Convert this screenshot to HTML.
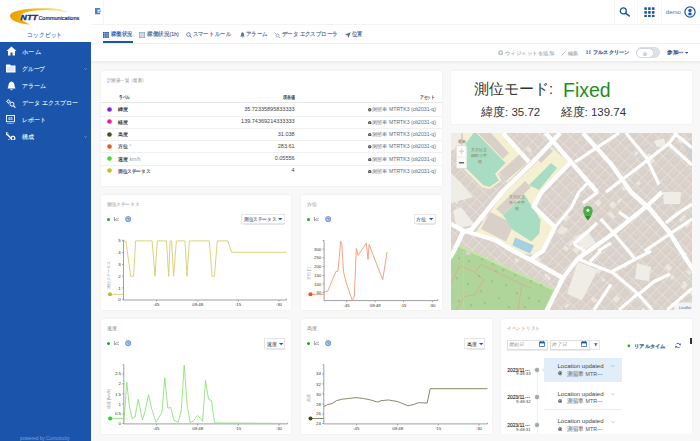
<!DOCTYPE html>
<html><head><meta charset="utf-8">
<style>
*{box-sizing:border-box}
html,body{margin:0;padding:0}
body{width:700px;height:441px;overflow:hidden;position:relative;background:#f8f8f8;font-family:"Liberation Sans",sans-serif;color:#333}
.a{position:absolute;white-space:nowrap}
.sb{left:0;top:0;width:91px;height:441px;background:#1b55ab}
.logo{left:0;top:0;width:91px;height:41.5px;background:#fff}
.mi{color:#fff;font-size:6.4px;left:22px;-webkit-text-stroke:0.05px #fff}
.card{position:absolute;background:#fff;box-shadow:0 0 1px rgba(0,0,0,.12)}
.ttl{font-size:4.6px;color:#888}
.tab{font-size:5.5px;color:#4a6796;-webkit-text-stroke:0.15px currentColor}
.cell{font-size:5px;color:#333}
</style></head><body>

<!-- SIDEBAR -->
<div class="a sb"></div>
<div class="a logo">
  <svg width="91" height="42" viewBox="0 0 91 42" style="position:absolute;left:0;top:0">
    <defs><linearGradient id="lg" x1="10" x2="68" y1="0" y2="0" gradientUnits="userSpaceOnUse"><stop offset="0" stop-color="#eaa000"/><stop offset="0.45" stop-color="#f4bd10"/><stop offset="1" stop-color="#fbecc0"/></linearGradient></defs>
    <path d="M30.2 24.5 C18 24 9.5 20 10 15.5 C10.8 10.5 26 7.8 50 8.2 C58 8.5 64 10 68.5 12.6 C60 10.8 52 10 46 10 C31 10.2 21.5 12.3 20.8 15.8 C20.3 19.3 24 22.2 30.2 24.5 Z" fill="url(#lg)"/>
    <text x="20.6" y="20.2" font-family="Liberation Sans" font-weight="bold" font-style="italic" font-size="6.3" fill="#1b2d7a" stroke="#1b2d7a" stroke-width="0.3" textLength="17" lengthAdjust="spacingAndGlyphs">NTT</text>
    <text x="38.4" y="20.2" font-family="Liberation Sans" font-size="5.6" fill="#1b2d7a" textLength="40.8" lengthAdjust="spacingAndGlyphs" stroke="#1b2d7a" stroke-width="0.22">Communications</text>
  </svg>
  <div class="a" style="left:27px;top:30.8px;font-size:6px;color:#4b79c4;letter-spacing:0.25px;-webkit-text-stroke:0.12px #4b79c4"><span style="display:inline-block;transform-origin:0 0;transform:scaleX(0.94)">コックピット</span></div>
</div>
<!-- menu items -->
<svg class="a" style="left:6px;top:46px" width="11" height="10" viewBox="0 0 11 10"><path d="M5.5 0.5 L0.5 5 H2 V9.5 H4.5 V6.5 H6.5 V9.5 H9 V5 H10.5 Z" fill="#fff"/></svg>
<div class="a mi" style="top:47.5px"><span style="display:inline-block;transform-origin:0 0;transform:scaleX(1.05)">ホーム</span></div>
<svg class="a" style="left:6px;top:64px" width="10" height="9" viewBox="0 0 10 9"><path d="M0 0.5 H4 L5 1.5 H9.5 V8.5 H0 Z" fill="#fff"/><rect x="1" y="2.5" width="7.5" height="5" fill="#dfe8f5"/></svg>
<div class="a mi" style="top:64.5px"><span style="display:inline-block;transform-origin:0 0;transform:scaleX(0.97)">グループ</span></div>
<svg class="a" style="left:83.6px;top:68px" width="3" height="2" viewBox="0 0 3 2"><path d="M0.3 0.3 L1.5 1.5 L2.7 0.3" fill="none" stroke="#aac0e6" stroke-width="0.5"/></svg>
<svg class="a" style="left:6.5px;top:81px" width="9" height="10" viewBox="0 0 9 10"><path d="M4.5 0.5 C2 1 1.5 3 1.5 5 L0.5 7.5 H8.5 L7.5 5 C7.5 3 7 1 4.5 0.5 Z M3.3 8.3 H5.7 C5.5 9.6 3.5 9.6 3.3 8.3Z" fill="#fff"/></svg>
<div class="a mi" style="top:81.5px">アラーム</div>
<svg class="a" style="left:5.8px;top:98.6px" width="10" height="9" viewBox="0 0 10 9"><circle cx="2.4" cy="2.4" r="1.3" fill="none" stroke="#fff" stroke-width="0.9"/><path d="M2.4 0 V0.8 M2.4 4 V4.8 M0 2.4 H0.8 M4 2.4 H4.8" stroke="#fff" stroke-width="0.7"/><circle cx="6" cy="5.2" r="2" fill="none" stroke="#fff" stroke-width="1"/><path d="M7.4 6.6 L9.4 8.6" stroke="#fff" stroke-width="1.2"/></svg>
<div class="a mi" style="top:98.5px">データ エクスプロー</div>
<svg class="a" style="left:6px;top:114.6px" width="9" height="9.5" viewBox="0 0 9 9.5"><rect x="0.5" y="0.5" width="8" height="6.2" fill="none" stroke="#fff" stroke-width="0.9"/><text x="4.5" y="5.4" text-anchor="middle" font-size="4" font-weight="bold" fill="#fff" font-family="Liberation Sans">01</text><path d="M1.5 8.6 H7.5" stroke="#fff" stroke-width="0.8" stroke-dasharray="0.8 0.5"/></svg>
<div class="a mi" style="top:115.5px">レポート</div>
<svg class="a" style="left:6px;top:131.8px" width="9.5" height="8.5" viewBox="0 0 9.5 8.5"><path d="M1 0.6 C0 1.6 0.6 3 1.8 3 L5.5 6.7" stroke="#fff" stroke-width="1.3" fill="none"/><path d="M0.8 0.2 L2.2 1.6" stroke="#fff" stroke-width="0.8"/><circle cx="7" cy="6.2" r="1.8" fill="none" stroke="#fff" stroke-width="1.1"/><path d="M7 3.6 V4.2 M7 8.2 V8.8 M4.4 6.2 H5 M9 6.2 H9.6 M5.2 4.4 L5.6 4.8 M8.4 7.6 L8.8 8" stroke="#fff" stroke-width="0.8"/><path d="M3.6 6.8 L2 8.4" stroke="#fff" stroke-width="1"/></svg>
<div class="a mi" style="top:132.5px">構成</div>
<svg class="a" style="left:83.6px;top:136px" width="3" height="2" viewBox="0 0 3 2"><path d="M0.3 0.3 L1.5 1.5 L2.7 0.3" fill="none" stroke="#aac0e6" stroke-width="0.5"/></svg>
<div class="a" style="left:20px;top:435.5px;font-size:4.6px;color:#7f9fd6"><span style="display:inline-block;transform-origin:0 0;transform:scaleX(1.04)">powered by Cumulocity</span></div>

<!-- HEADER -->
<div class="a" style="left:91px;top:0;width:609px;height:61px;background:#fff"></div>
<div class="a" style="left:91px;top:23.5px;width:609px;height:1px;background:#f3f3f3"></div>
<div class="a" style="left:103.3px;top:0;width:0.8px;height:23.5px;background:#f6f6f6"></div>
<div class="a" style="left:614px;top:0;width:1px;height:23.5px;background:#f6f6f6"></div>
<div class="a" style="left:637px;top:0;width:1px;height:23.5px;background:#f6f6f6"></div>
<div class="a" style="left:660.5px;top:0;width:1px;height:23.5px;background:#f6f6f6"></div>
<svg class="a" style="left:95px;top:8.2px" width="6.5" height="6.4" viewBox="0 0 6.5 6.4"><rect x="0" y="0" width="5.2" height="6.3" fill="#4f80c8"/><rect x="2.6" y="1.7" width="2.7" height="2.9" fill="#fff"/><path d="M3.2 3.15 L4.4 2.3 V4 Z" fill="#3f72c0"/><rect x="4.2" y="2.85" width="2.1" height="0.6" fill="#3f72c0"/></svg>
<!-- search -->
<svg class="a" style="left:619px;top:7px" width="12" height="10" viewBox="0 0 12 10"><circle cx="4.3" cy="3.9" r="3" fill="none" stroke="#1b55ab" stroke-width="1.3"/><path d="M6.5 6.2 L10.8 9.3" stroke="#1b55ab" stroke-width="1.5"/></svg>
<!-- grid -->
<svg class="a" style="left:643.5px;top:6.5px" width="11" height="10.5" viewBox="0 0 11 10.5">
<g fill="#1b55ab"><rect x="0.3" y="0.3" width="2.6" height="2.6"/><rect x="4.1" y="0.3" width="2.6" height="2.6"/><rect x="7.9" y="0.3" width="2.6" height="2.6"/><rect x="0.3" y="4.1" width="2.6" height="2.6"/><rect x="4.1" y="4.1" width="2.6" height="2.6"/><rect x="7.9" y="4.1" width="2.6" height="2.6"/><rect x="0.3" y="7.9" width="2.6" height="2.6"/><rect x="4.1" y="7.9" width="2.6" height="2.6"/><rect x="7.9" y="7.9" width="2.6" height="2.6"/></g></svg>
<div class="a" style="left:665.8px;top:8.6px;font-size:6px;color:#4d6eae">demo</div>
<svg class="a" style="left:684px;top:5.5px" width="12" height="12" viewBox="0 0 12 12"><circle cx="6" cy="6" r="5.1" fill="none" stroke="#1b55ab" stroke-width="1.2"/><circle cx="6" cy="4.4" r="1.7" fill="#1b55ab"/><path d="M4.4 9.3 V7.4 C4.4 6.2 7.6 6.2 7.6 7.4 V9.3 Z" fill="#1b55ab"/></svg>

<!-- tabs -->
<div class="a" style="left:91px;top:43px;width:609px;height:0.7px;background:#eef0f3"></div>
<svg class="a" style="left:103px;top:32px" width="6" height="6" viewBox="0 0 6 6"><g fill="#1b55ab"><rect x="0" y="0" width="1.7" height="1.7"/><rect x="2.1" y="0" width="1.7" height="1.7"/><rect x="4.2" y="0" width="1.7" height="1.7"/><rect x="0" y="2.1" width="1.7" height="1.7"/><rect x="2.1" y="2.1" width="1.7" height="1.7"/><rect x="4.2" y="2.1" width="1.7" height="1.7"/><rect x="0" y="4.2" width="1.7" height="1.7"/><rect x="2.1" y="4.2" width="1.7" height="1.7"/><rect x="4.2" y="4.2" width="1.7" height="1.7"/></g></svg>
<div class="a tab" style="left:111px;top:31.1px;color:#1b55ab"><span style="display:inline-block;transform-origin:0 0;transform:scaleX(0.88)">稼働状況</span></div>
<div class="a" style="left:103px;top:41.3px;width:29.5px;height:1.7px;background:#1b55ab"></div>
<svg class="a" style="left:139px;top:32px" width="6" height="6" viewBox="0 0 6 6"><rect x="0.3" y="0.3" width="5.4" height="5.4" fill="none" stroke="#7e93b8" stroke-width="0.6"/><path d="M0.3 2 H5.7 M0.3 4 H5.7 M2 0.3 V5.7 M4 0.3 V5.7" stroke="#7e93b8" stroke-width="0.4"/></svg>
<div class="a tab" style="left:146.5px;top:31.1px"><span style="display:inline-block;transform-origin:0 0;transform:scaleX(0.94)">稼働状況(1h)</span></div>
<svg class="a" style="left:185.5px;top:32px" width="6" height="6" viewBox="0 0 6 6"><circle cx="2.5" cy="2.5" r="1.8" fill="none" stroke="#5b76a3" stroke-width="0.9"/><path d="M3.8 3.8 L5.6 5.6" stroke="#5b76a3" stroke-width="1"/></svg>
<div class="a tab" style="left:193px;top:31.1px"><span style="display:inline-block;transform-origin:0 0;transform:scaleX(0.87)">スマート ルール</span></div>
<svg class="a" style="left:239.5px;top:32px" width="5" height="6" viewBox="0 0 5 6"><path d="M2.5 0.3 C1 0.6 1 2 1 3 L0.3 4.6 H4.7 L4 3 C4 2 4 0.6 2.5 0.3Z M1.8 5 H3.2 C3 5.9 2 5.9 1.8 5Z" fill="#5b76a3"/></svg>
<div class="a tab" style="left:246px;top:31.1px"><span style="display:inline-block;transform-origin:0 0;transform:scaleX(0.89)">アラーム</span></div>
<svg class="a" style="left:274px;top:32px" width="6" height="6" viewBox="0 0 6 6"><circle cx="3.6" cy="3.6" r="1.5" fill="none" stroke="#8aa0c4" stroke-width="0.8"/><path d="M4.7 4.7 L5.8 5.8 M0.5 0.5 L2.3 2.3" stroke="#8aa0c4" stroke-width="0.8"/></svg>
<div class="a tab" style="left:281.5px;top:31.1px"><span style="display:inline-block;transform-origin:0 0;transform:scaleX(0.9)">データ エクスプローラ</span></div>
<svg class="a" style="left:344.5px;top:32.3px" width="6" height="6" viewBox="0 0 6 6"><path d="M0.2 2.6 L5.8 0.2 L3.4 5.8 L2.6 3.4 Z" fill="#4d6b99"/></svg>
<div class="a tab" style="left:351.5px;top:31.1px"><span style="display:inline-block;transform-origin:0 0;transform:scaleX(0.88)">位置</span></div>

<!-- action bar -->
<svg class="a" style="left:497.5px;top:50.3px" width="5.4" height="5.4" viewBox="0 0 6 6"><circle cx="3" cy="3" r="2.8" fill="#b8c0cc"/><path d="M3 1.5 V4.5 M1.5 3 H4.5" stroke="#fff" stroke-width="0.8"/></svg>
<div class="a" style="left:505px;top:49.8px;font-size:5.2px;color:#aeb5c1;-webkit-text-stroke:0.15px #aeb5c1"><span style="display:inline-block;transform-origin:0 0;transform:scaleX(1.09)">ウィジェットを追加</span></div>
<svg class="a" style="left:561px;top:50.5px" width="5" height="5" viewBox="0 0 5 5"><path d="M0.5 4.5 L4.3 0.7" stroke="#aab3c0" stroke-width="0.9"/></svg>
<div class="a" style="left:568px;top:49.8px;font-size:5.2px;color:#aeb5c1;-webkit-text-stroke:0.15px #aeb5c1">編集</div>
<svg class="a" style="left:585.6px;top:50.3px" width="5" height="4.4" viewBox="0 0 5 4.4"><g fill="none" stroke="#5a78a8" stroke-width="0.75"><path d="M0.4 1.6 L1.6 1.6 L1.6 0.4 M0.4 0.4 L1.6 1.6"/><path d="M4.6 1.6 L3.4 1.6 L3.4 0.4 M4.6 0.4 L3.4 1.6"/><path d="M0.4 2.8 L1.6 2.8 L1.6 4 M0.4 4 L1.6 2.8"/><path d="M4.6 2.8 L3.4 2.8 L3.4 4 M4.6 4 L3.4 2.8"/></g></svg>
<div class="a" style="left:593.3px;top:49.1px;font-size:5.3px;color:#3e5b8e;-webkit-text-stroke:0.3px #3e5b8e"><span style="display:inline-block;transform-origin:0 0;transform:scaleX(1.04)">フルスクリーン</span></div>
<div class="a" style="left:635.8px;top:47.3px;width:24px;height:11.2px;border-radius:6px;background:#dde1e8;border:0.5px solid #d8dce3"></div>
<div class="a" style="left:636.2px;top:47.8px;width:18px;height:10.2px;border-radius:5.1px;background:#fff;border:0.6px solid #d3d7de"></div>
<svg class="a" style="left:643px;top:50.5px" width="4" height="5" viewBox="0 0 4 5"><rect x="0.3" y="2" width="3.4" height="2.8" fill="#c6ccd6"/><path d="M1 2 V1.2 C1 0.2 3 0.2 3 1.2 V2" fill="none" stroke="#c6ccd6" stroke-width="0.5"/></svg>
<div class="a" style="left:667.2px;top:49.3px;font-size:5.3px;color:#3e5b8e;-webkit-text-stroke:0.3px #3e5b8e"><span style="display:inline-block;transform-origin:0 0;transform:scaleX(1.1)">参加⋯</span></div>
<svg class="a" style="left:684.9px;top:51.6px" width="3.2" height="2.2" viewBox="0 0 3.2 2.2"><path d="M0 0 H3.2 L1.6 2Z" fill="#3e5b8e"/></svg>
<!-- shadow under header -->
<div class="a" style="left:91px;top:61px;width:609px;height:3px;background:linear-gradient(#e9e9e9,#f8f8f8)"></div>

<!-- CARD: table -->
<div class="card" style="left:100.8px;top:70.8px;width:341px;height:115.4px"></div>
<div class="a ttl" style="left:106.8px;top:77.5px"><span style="display:inline-block;transform-origin:0 0;transform:scaleX(0.875)">計測値一覧（最新）</span></div>
<div class="a cell" style="left:118.6px;top:93.8px;font-weight:bold;font-size:4.8px"><span style="display:inline-block;transform-origin:0 0;transform:scaleX(0.73)">ラベル</span></div>
<div class="a cell" style="left:282.5px;top:93.8px;font-weight:bold;font-size:4.8px"><span style="display:inline-block;transform-origin:0 0;transform:scaleX(0.8)">現在値</span></div>
<div class="a cell" style="left:420px;top:93.8px;font-weight:bold;font-size:4.8px"><span style="display:inline-block;transform-origin:0 0;transform:scaleX(0.73)">アセット</span></div>
<div class="a" style="left:100.8px;top:102px;width:341px;height:0.6px;background:#e6e6e6"></div>
<svg class="a" style="left:106.8px;top:107.0px" width="5" height="5" viewBox="0 0 5 5"><circle cx="2.5" cy="2.5" r="2.3" fill="#7a22e6"/></svg>
<div class="a" style="left:118.2px;top:106.30000000000001px;font-size:5px;color:#333;-webkit-text-stroke:0.15px #333">緯度</div>
<div class="a" style="right:405.4px;top:106.0px;font-size:5.5px;color:#444">35.72335895833333</div>
<svg class="a" style="left:368.2px;top:108.30000000000001px" width="3.5" height="3.5" viewBox="0 0 4 4"><circle cx="2" cy="2" r="1.95" fill="#4a4a4a"/><circle cx="2" cy="2" r="0.7" fill="#ddd"/></svg>
<div class="a" style="right:264.2px;top:106.30000000000001px;font-size:5px;color:#5a6a80"><span style="display:inline-block;transform-origin:100% 0;transform:scaleX(1.03)">測留車 MTRTK3 (olt2031-q)</span></div>
<div class="a" style="left:100.8px;top:115.5px;width:341px;height:0.6px;background:#f0f0f0"></div>
<svg class="a" style="left:106.8px;top:119.3px" width="5" height="5" viewBox="0 0 5 5"><circle cx="2.5" cy="2.5" r="2.3" fill="#f2199a"/></svg>
<div class="a" style="left:118.2px;top:118.60000000000001px;font-size:5px;color:#333;-webkit-text-stroke:0.15px #333">経度</div>
<div class="a" style="right:405.4px;top:118.3px;font-size:5.5px;color:#444">139.74369214333333</div>
<svg class="a" style="left:368.2px;top:120.60000000000001px" width="3.5" height="3.5" viewBox="0 0 4 4"><circle cx="2" cy="2" r="1.95" fill="#4a4a4a"/><circle cx="2" cy="2" r="0.7" fill="#ddd"/></svg>
<div class="a" style="right:264.2px;top:118.60000000000001px;font-size:5px;color:#5a6a80"><span style="display:inline-block;transform-origin:100% 0;transform:scaleX(1.03)">測留車 MTRTK3 (olt2031-q)</span></div>
<div class="a" style="left:100.8px;top:127.8px;width:341px;height:0.6px;background:#f0f0f0"></div>
<svg class="a" style="left:106.8px;top:131.6px" width="5" height="5" viewBox="0 0 5 5"><circle cx="2.5" cy="2.5" r="2.3" fill="#4b4a1c"/></svg>
<div class="a" style="left:118.2px;top:130.9px;font-size:5px;color:#333;-webkit-text-stroke:0.15px #333">高度</div>
<div class="a" style="right:405.4px;top:130.6px;font-size:5.5px;color:#444">31.038</div>
<svg class="a" style="left:368.2px;top:132.9px" width="3.5" height="3.5" viewBox="0 0 4 4"><circle cx="2" cy="2" r="1.95" fill="#4a4a4a"/><circle cx="2" cy="2" r="0.7" fill="#ddd"/></svg>
<div class="a" style="right:264.2px;top:130.9px;font-size:5px;color:#5a6a80"><span style="display:inline-block;transform-origin:100% 0;transform:scaleX(1.03)">測留車 MTRTK3 (olt2031-q)</span></div>
<div class="a" style="left:100.8px;top:140.1px;width:341px;height:0.6px;background:#f0f0f0"></div>
<svg class="a" style="left:106.8px;top:143.9px" width="5" height="5" viewBox="0 0 5 5"><circle cx="2.5" cy="2.5" r="2.3" fill="#ea5a1e"/></svg>
<div class="a" style="left:118.2px;top:143.20000000000002px;font-size:5px;color:#333;-webkit-text-stroke:0.15px #333">方位<span style="color:#8a96a8;-webkit-text-stroke:0"> °</span></div>
<div class="a" style="right:405.4px;top:142.9px;font-size:5.5px;color:#444">283.61</div>
<svg class="a" style="left:368.2px;top:145.20000000000002px" width="3.5" height="3.5" viewBox="0 0 4 4"><circle cx="2" cy="2" r="1.95" fill="#4a4a4a"/><circle cx="2" cy="2" r="0.7" fill="#ddd"/></svg>
<div class="a" style="right:264.2px;top:143.20000000000002px;font-size:5px;color:#5a6a80"><span style="display:inline-block;transform-origin:100% 0;transform:scaleX(1.03)">測留車 MTRTK3 (olt2031-q)</span></div>
<div class="a" style="left:100.8px;top:152.4px;width:341px;height:0.6px;background:#f0f0f0"></div>
<svg class="a" style="left:106.8px;top:156.2px" width="5" height="5" viewBox="0 0 5 5"><circle cx="2.5" cy="2.5" r="2.3" fill="#3fdc2c"/></svg>
<div class="a" style="left:118.2px;top:155.5px;font-size:5px;color:#333;-webkit-text-stroke:0.15px #333">速度<span style="color:#8a96a8;-webkit-text-stroke:0"> km/h</span></div>
<div class="a" style="right:405.4px;top:155.2px;font-size:5.5px;color:#444">0.05556</div>
<svg class="a" style="left:368.2px;top:157.5px" width="3.5" height="3.5" viewBox="0 0 4 4"><circle cx="2" cy="2" r="1.95" fill="#4a4a4a"/><circle cx="2" cy="2" r="0.7" fill="#ddd"/></svg>
<div class="a" style="right:264.2px;top:155.5px;font-size:5px;color:#5a6a80"><span style="display:inline-block;transform-origin:100% 0;transform:scaleX(1.03)">測留車 MTRTK3 (olt2031-q)</span></div>
<div class="a" style="left:100.8px;top:164.7px;width:341px;height:0.6px;background:#f0f0f0"></div>
<svg class="a" style="left:106.8px;top:168.4px" width="5" height="5" viewBox="0 0 5 5"><circle cx="2.5" cy="2.5" r="2.3" fill="#cbbd1e"/></svg>
<div class="a" style="left:118.2px;top:167.70000000000002px;font-size:5px;color:#333;-webkit-text-stroke:0.15px #333"><span style="display:inline-block;transform-origin:0 0;transform:scaleX(0.92)">測位ステータス</span></div>
<div class="a" style="right:405.4px;top:167.4px;font-size:5.5px;color:#444">4</div>
<svg class="a" style="left:368.2px;top:169.70000000000002px" width="3.5" height="3.5" viewBox="0 0 4 4"><circle cx="2" cy="2" r="1.95" fill="#4a4a4a"/><circle cx="2" cy="2" r="0.7" fill="#ddd"/></svg>
<div class="a" style="right:264.2px;top:167.70000000000002px;font-size:5px;color:#5a6a80"><span style="display:inline-block;transform-origin:100% 0;transform:scaleX(1.03)">測留車 MTRTK3 (olt2031-q)</span></div>


<!-- CARD: mode -->
<div class="card" style="left:451px;top:70.5px;width:241px;height:53px"></div>
<div class="a" style="left:474px;top:80px;font-size:14.6px;color:#333">測位モード:</div>
<div class="a" style="left:563px;top:78.5px;font-size:19.5px;color:#1f8c1f">Fixed</div>
<div class="a" style="left:481px;top:104.5px;font-size:11.5px;color:#333">緯度: 35.72</div>
<div class="a" style="left:560.5px;top:104.5px;font-size:11.5px;color:#333">経度: 139.74</div>

<!-- MAP -->
<svg class="a" style="left:451px;top:133px" width="241" height="177" viewBox="0 0 241 177"><defs><pattern id="bp" width="10" height="8" patternUnits="userSpaceOnUse" patternTransform="rotate(-46)"><rect width="10" height="8" fill="#d9d0c9"/><path d="M0 0.4 H10 M0.4 0 V8" stroke="#e9e3dc" stroke-width="0.8"/><path d="M5 4 H10 M5 0 V4" stroke="#e2dbd4" stroke-width="0.5"/></pattern></defs><rect width="241" height="177" fill="url(#bp)"/><rect x="109.0" y="99.1" width="7.6" height="4.1" fill="#ebe6df" transform="rotate(-46 109.0 99.1)"/><rect x="44.5" y="90.6" width="6.1" height="5.3" fill="#ebe6df" transform="rotate(-46 44.5 90.6)"/><rect x="107.6" y="25.1" width="5.7" height="5.6" fill="#ebe6df" transform="rotate(-46 107.6 25.1)"/><rect x="143.5" y="70.1" width="5.3" height="5.1" fill="#ebe6df" transform="rotate(-46 143.5 70.1)"/><rect x="150.2" y="147.2" width="3.3" height="2.6" fill="#ebe6df" transform="rotate(-46 150.2 147.2)"/><rect x="144.5" y="137.7" width="4.6" height="4.6" fill="#ebe6df" transform="rotate(-46 144.5 137.7)"/><rect x="125.1" y="113.3" width="5.5" height="4.8" fill="#ebe6df" transform="rotate(44 125.1 113.3)"/><rect x="157.8" y="72.0" width="5.8" height="5.8" fill="#ebe6df" transform="rotate(-46 157.8 72.0)"/><rect x="170.6" y="55.8" width="4.1" height="3.5" fill="#ebe6df" transform="rotate(-46 170.6 55.8)"/><rect x="135.7" y="19.1" width="3.5" height="3.5" fill="#ebe6df" transform="rotate(-46 135.7 19.1)"/><rect x="230.9" y="150.0" width="3.0" height="3.2" fill="#ebe6df" transform="rotate(-46 230.9 150.0)"/><rect x="113.3" y="173.5" width="5.0" height="2.8" fill="#ebe6df" transform="rotate(-46 113.3 173.5)"/><rect x="187.6" y="47.8" width="3.4" height="3.7" fill="#ebe6df" transform="rotate(44 187.6 47.8)"/><rect x="182.7" y="20.9" width="4.2" height="2.9" fill="#ebe6df" transform="rotate(-46 182.7 20.9)"/><rect x="112.1" y="86.2" width="6.4" height="3.2" fill="#ebe6df" transform="rotate(-46 112.1 86.2)"/><rect x="237.5" y="136.2" width="5.1" height="3.8" fill="#ebe6df" transform="rotate(44 237.5 136.2)"/><rect x="101.4" y="37.7" width="4.3" height="5.9" fill="#ebe6df" transform="rotate(44 101.4 37.7)"/><rect x="240.5" y="3.5" width="3.9" height="6.0" fill="#ebe6df" transform="rotate(-46 240.5 3.5)"/><rect x="10.1" y="25.9" width="5.2" height="2.5" fill="#ebe6df" transform="rotate(44 10.1 25.9)"/><rect x="200.1" y="68.4" width="3.4" height="3.2" fill="#ebe6df" transform="rotate(-46 200.1 68.4)"/><rect x="3.7" y="65.3" width="6.1" height="2.9" fill="#ebe6df" transform="rotate(44 3.7 65.3)"/><rect x="200.6" y="24.0" width="4.9" height="4.7" fill="#ebe6df" transform="rotate(44 200.6 24.0)"/><rect x="218.9" y="144.8" width="4.2" height="3.2" fill="#ebe6df" transform="rotate(-46 218.9 144.8)"/><rect x="165.6" y="68.7" width="5.4" height="2.8" fill="#ebe6df" transform="rotate(-46 165.6 68.7)"/><rect x="25.0" y="6.8" width="7.8" height="3.3" fill="#ebe6df" transform="rotate(44 25.0 6.8)"/><rect x="61.9" y="145.8" width="6.0" height="3.5" fill="#ebe6df" transform="rotate(-46 61.9 145.8)"/><rect x="223.9" y="173.0" width="3.6" height="4.2" fill="#ebe6df" transform="rotate(-46 223.9 173.0)"/><rect x="67.5" y="162.4" width="4.0" height="2.6" fill="#ebe6df" transform="rotate(44 67.5 162.4)"/><rect x="99.2" y="44.1" width="3.2" height="3.5" fill="#ebe6df" transform="rotate(-46 99.2 44.1)"/><rect x="22.2" y="24.5" width="5.3" height="3.7" fill="#ebe6df" transform="rotate(-46 22.2 24.5)"/><rect x="142.2" y="163.5" width="5.4" height="3.8" fill="#ebe6df" transform="rotate(44 142.2 163.5)"/><rect x="232.0" y="3.8" width="6.2" height="4.2" fill="#ebe6df" transform="rotate(44 232.0 3.8)"/><rect x="76.9" y="176.9" width="3.4" height="4.4" fill="#ebe6df" transform="rotate(-46 76.9 176.9)"/><rect x="216.9" y="130.5" width="6.5" height="5.3" fill="#ebe6df" transform="rotate(44 216.9 130.5)"/><rect x="84.8" y="121.3" width="7.5" height="5.5" fill="#ebe6df" transform="rotate(44 84.8 121.3)"/><rect x="227.6" y="5.4" width="5.5" height="2.6" fill="#ebe6df" transform="rotate(44 227.6 5.4)"/><rect x="91.4" y="2.2" width="3.4" height="2.8" fill="#ebe6df" transform="rotate(-46 91.4 2.2)"/><rect x="239.4" y="155.7" width="6.6" height="3.9" fill="#ebe6df" transform="rotate(44 239.4 155.7)"/><rect x="106.2" y="148.4" width="3.4" height="5.1" fill="#ebe6df" transform="rotate(-46 106.2 148.4)"/><rect x="74.8" y="15.5" width="3.1" height="5.9" fill="#ebe6df" transform="rotate(-46 74.8 15.5)"/><rect x="119.8" y="108.8" width="7.6" height="3.4" fill="#ebe6df" transform="rotate(-46 119.8 108.8)"/><rect x="88.7" y="25.4" width="6.1" height="4.3" fill="#ebe6df" transform="rotate(44 88.7 25.4)"/><rect x="159.1" y="78.2" width="7.5" height="3.6" fill="#ebe6df" transform="rotate(44 159.1 78.2)"/><rect x="47.8" y="76.3" width="7.0" height="5.7" fill="#ebe6df" transform="rotate(-46 47.8 76.3)"/><rect x="92.6" y="103.2" width="4.6" height="3.0" fill="#ebe6df" transform="rotate(44 92.6 103.2)"/><rect x="84.5" y="158.5" width="3.2" height="2.7" fill="#ebe6df" transform="rotate(44 84.5 158.5)"/><rect x="198.1" y="20.0" width="5.4" height="5.7" fill="#ebe6df" transform="rotate(44 198.1 20.0)"/><rect x="92.2" y="92.0" width="6.4" height="5.0" fill="#ebe6df" transform="rotate(44 92.2 92.0)"/><rect x="77.2" y="146.7" width="4.4" height="4.6" fill="#ebe6df" transform="rotate(44 77.2 146.7)"/><rect x="137.5" y="54.7" width="7.0" height="2.6" fill="#ebe6df" transform="rotate(-46 137.5 54.7)"/><rect x="97.7" y="33.6" width="6.8" height="3.4" fill="#ebe6df" transform="rotate(-46 97.7 33.6)"/><rect x="192.0" y="174.2" width="3.6" height="2.9" fill="#ebe6df" transform="rotate(44 192.0 174.2)"/><rect x="231.0" y="121.2" width="4.0" height="4.2" fill="#ebe6df" transform="rotate(-46 231.0 121.2)"/><rect x="172.1" y="133.6" width="5.7" height="2.6" fill="#ebe6df" transform="rotate(-46 172.1 133.6)"/><rect x="65.6" y="61.2" width="6.5" height="4.3" fill="#ebe6df" transform="rotate(-46 65.6 61.2)"/><rect x="94.8" y="140.2" width="7.5" height="2.8" fill="#ebe6df" transform="rotate(44 94.8 140.2)"/><rect x="31.3" y="80.3" width="6.1" height="5.7" fill="#ebe6df" transform="rotate(44 31.3 80.3)"/><rect x="132.6" y="115.5" width="5.5" height="5.4" fill="#ebe6df" transform="rotate(44 132.6 115.5)"/><rect x="111.8" y="115.3" width="4.0" height="5.0" fill="#ebe6df" transform="rotate(-46 111.8 115.3)"/><rect x="51.4" y="159.3" width="7.9" height="5.9" fill="#ebe6df" transform="rotate(44 51.4 159.3)"/><rect x="63.1" y="127.1" width="3.1" height="4.3" fill="#ebe6df" transform="rotate(-46 63.1 127.1)"/><rect x="106.3" y="97.4" width="6.8" height="4.2" fill="#ebe6df" transform="rotate(-46 106.3 97.4)"/><rect x="52.6" y="153.6" width="5.1" height="2.6" fill="#ebe6df" transform="rotate(44 52.6 153.6)"/><rect x="165.5" y="162.1" width="5.4" height="6.0" fill="#ebe6df" transform="rotate(44 165.5 162.1)"/><rect x="227.9" y="87.2" width="7.7" height="2.8" fill="#ebe6df" transform="rotate(-46 227.9 87.2)"/><rect x="105.9" y="98.9" width="7.2" height="4.5" fill="#ebe6df" transform="rotate(-46 105.9 98.9)"/><rect x="126.0" y="149.3" width="5.8" height="3.6" fill="#ebe6df" transform="rotate(44 126.0 149.3)"/><rect x="230.1" y="154.0" width="6.0" height="3.6" fill="#ebe6df" transform="rotate(-46 230.1 154.0)"/><rect x="233.4" y="92.8" width="5.9" height="3.2" fill="#ebe6df" transform="rotate(-46 233.4 92.8)"/><rect x="121.3" y="107.1" width="3.1" height="5.9" fill="#ebe6df" transform="rotate(44 121.3 107.1)"/><polygon points="0,0 10,0 10,12 0,18" fill="#f0ece6"/><polygon points="0,40 10,50 22,64 0,70" fill="#f0ece6"/><polygon points="2,78 10,74 24,92 6,95" fill="#f0ece6"/><polygon points="126.8,128.7 146.9,136.7 130.8,167.5 116,160.8" fill="#f0ece6"/><polygon points="212,59 230,59 229,71 213,71" fill="#f0ece6"/><polygon points="186,130 200,134 198,148 184,146" fill="#f0ece6"/><polygon points="124,104 136,97 145,110 132,118" fill="#f0ece6"/><polygon points="203,8 213,5 215,13 206,14" fill="#f0ece6"/><polygon points="12,0 27,0 57,30 47,41 50.5,47.5 39,56 31,54.5 11.5,35 12,10" fill="#f5f0d2"/><polygon points="25,0 52,0 78,28 56,50 48,40 57,30" fill="#f5f0d2"/><polygon points="27,0 40,0 58,20 52,26" fill="#d9d0c9"/><polygon points="48.5,39.4 69.7,20.2 77.8,28.3 54.5,48.5" fill="#d9d0c9"/><polygon points="22.5,0 25.5,0 54.5,30 44,41 48,47.5 38.5,54 32,52 14,34 14.5,11" fill="#a8dcc3"/><polygon points="24,100 51,62 82,33 100,14 118,30 90,59 82,73 104,94 88,122 62,120 44,107" fill="#f5f0d2"/><polygon points="39,79 63,91 55,108.5 30,96" fill="#d9d0c9"/><polygon points="45,76 74,48 80,54 52,82" fill="#d9d0c9"/><polygon points="84,24 96,12 102,18 90,30" fill="#d9d0c9"/><polygon points="52,82 73.6,61.7 89.6,87 88.3,100.5 80.3,108.5 61.5,96.5" fill="#a8dcc3"/><polygon points="78,52 100,30 106,35 88,57" fill="#a8dcc3"/><polygon points="64,104.5 83,112.5 79,120.5 61.5,112.5" fill="#a5d0e0"/><polygon points="0,123 5.4,111 104.3,156.7 95,177 0,177" fill="#afd59b"/><polyline points="5.4,111.8 103.6,157 94.4,177" fill="none" stroke="#c3e8a4" stroke-width="2"/><polyline points="0,150 8.7,132.7 24,139.4 32.8,146.8 24,162 13.4,163.5 5.4,177" fill="none" stroke="#d8ab90" stroke-width="0.9"/><polyline points="24,139.4 30,131.4 70.9,151.4 80,155" fill="none" stroke="#d8ab90" stroke-width="0.9"/><polyline points="70.9,151.4 67,177" fill="none" stroke="#d8ab90" stroke-width="0.9"/><path d="M12.7 118 V177" stroke="#c2dfae" stroke-width="0.5"/><path d="M7 126 L8 124 L9 126 M8 124.5 V126.6" fill="none" stroke="#8fb87c" stroke-width="0.5"/><path d="M17 129 L18 127 L19 129 M18 127.5 V129.6" fill="none" stroke="#8fb87c" stroke-width="0.5"/><path d="M30 127 L31 125 L32 127 M31 125.5 V127.6" fill="none" stroke="#8fb87c" stroke-width="0.5"/><path d="M41 132 L42 130 L43 132 M42 130.5 V132.6" fill="none" stroke="#8fb87c" stroke-width="0.5"/><path d="M51 138 L52 136 L53 138 M52 136.5 V138.6" fill="none" stroke="#8fb87c" stroke-width="0.5"/><path d="M63 143 L64 141 L65 143 M64 141.5 V143.6" fill="none" stroke="#8fb87c" stroke-width="0.5"/><path d="M79 149 L80 147 L81 149 M80 147.5 V149.6" fill="none" stroke="#8fb87c" stroke-width="0.5"/><path d="M89 153 L90 151 L91 153 M90 151.5 V153.6" fill="none" stroke="#8fb87c" stroke-width="0.5"/><path d="M5 146 L6 144 L7 146 M6 144.5 V146.6" fill="none" stroke="#8fb87c" stroke-width="0.5"/><path d="M16 152 L17 150 L18 152 M17 150.5 V152.6" fill="none" stroke="#8fb87c" stroke-width="0.5"/><path d="M29 159 L30 157 L31 159 M30 157.5 V159.6" fill="none" stroke="#8fb87c" stroke-width="0.5"/><path d="M40 149 L41 147 L42 149 M41 147.5 V149.6" fill="none" stroke="#8fb87c" stroke-width="0.5"/><path d="M54 153 L55 151 L56 153 M55 151.5 V153.6" fill="none" stroke="#8fb87c" stroke-width="0.5"/><path d="M65 161 L66 159 L67 161 M66 159.5 V161.6" fill="none" stroke="#8fb87c" stroke-width="0.5"/><path d="M77 166 L78 164 L79 166 M78 164.5 V166.6" fill="none" stroke="#8fb87c" stroke-width="0.5"/><path d="M87 169 L88 167 L89 169 M88 167.5 V169.6" fill="none" stroke="#8fb87c" stroke-width="0.5"/><path d="M7 169 L8 167 L9 169 M8 167.5 V169.6" fill="none" stroke="#8fb87c" stroke-width="0.5"/><path d="M19 173 L20 171 L21 173 M20 171.5 V173.6" fill="none" stroke="#8fb87c" stroke-width="0.5"/><path d="M33 171 L34 169 L35 171 M34 169.5 V171.6" fill="none" stroke="#8fb87c" stroke-width="0.5"/><path d="M47 166 L48 164 L49 166 M48 164.5 V166.6" fill="none" stroke="#8fb87c" stroke-width="0.5"/><path d="M57 175 L58 173 L59 175 M58 173.5 V175.6" fill="none" stroke="#8fb87c" stroke-width="0.5"/><path d="M73 175 L74 173 L75 175 M74 173.5 V175.6" fill="none" stroke="#8fb87c" stroke-width="0.5"/><path d="M44 139 L45 137 L46 139 M45 137.5 V139.6" fill="none" stroke="#8fb87c" stroke-width="0.5"/><path d="M27 144 L28 142 L29 144 M28 142.5 V144.6" fill="none" stroke="#8fb87c" stroke-width="0.5"/><rect x="14.7" y="118" width="5" height="4" fill="#d9d0c9"/><polygon points="233,12 241,6 241,32" fill="#cfcfcf"/><polyline points="12,99 21,96 51,59 80,31 101,9 109,0" fill="none" stroke="#ffffff" stroke-width="4.4" stroke-linejoin="round"/><polyline points="-2,90 12,97.5 44,107 62,118 80,127 112,145" fill="none" stroke="#ffffff" stroke-width="4.4" stroke-linejoin="round"/><polyline points="95,179 112,145 126.5,126 160,102 196,73 211,59" fill="none" stroke="#ffffff" stroke-width="4.4" stroke-linejoin="round"/><polyline points="132,0 160,31 180,59 199,76 218,99 230,118 243,138" fill="none" stroke="#ffffff" stroke-width="4.4" stroke-linejoin="round"/><polyline points="94.7,0 120,29 146,59" fill="none" stroke="#ffffff" stroke-width="4.4" stroke-linejoin="round"/><polyline points="120,29 90.7,59 82.7,73.7 104,94 92,118 80,126" fill="none" stroke="#ffffff" stroke-width="4.4" stroke-linejoin="round"/><polyline points="12,99 3,118 -1,125" fill="none" stroke="#ffffff" stroke-width="4.4" stroke-linejoin="round"/><polyline points="52,0 78,29" fill="none" stroke="#ffffff" stroke-width="4.4" stroke-linejoin="round"/><polyline points="104,94 120,75 128,59 137.5,49" fill="none" stroke="#ffffff" stroke-width="3.2" stroke-linejoin="round"/><polyline points="124,29 160,5.4 168,0" fill="none" stroke="#ffffff" stroke-width="3.2" stroke-linejoin="round"/><polyline points="132,70 147,59" fill="none" stroke="#ffffff" stroke-width="3.2" stroke-linejoin="round"/><polyline points="123,111 137.5,98 146,90" fill="none" stroke="#ffffff" stroke-width="3.2" stroke-linejoin="round"/><polyline points="123,111 133.5,118" fill="none" stroke="#ffffff" stroke-width="3.2" stroke-linejoin="round"/><polyline points="149.6,85.8 160,97 177.4,118 184,126" fill="none" stroke="#ffffff" stroke-width="3.2" stroke-linejoin="round"/><polyline points="160,110 147,118" fill="none" stroke="#ffffff" stroke-width="3.2" stroke-linejoin="round"/><polyline points="175,0 195.5,25 208,51.5" fill="none" stroke="#ffffff" stroke-width="3.2" stroke-linejoin="round"/><polyline points="155,59 176,43 217.6,10.7 226,0" fill="none" stroke="#ffffff" stroke-width="3.2" stroke-linejoin="round"/><polyline points="217.6,10.7 241,32" fill="none" stroke="#ffffff" stroke-width="3.2" stroke-linejoin="round"/><polyline points="223,0 241,14.7" fill="none" stroke="#ffffff" stroke-width="3.2" stroke-linejoin="round"/><polyline points="214.9,89.8 226.9,80.4 241,71" fill="none" stroke="#ffffff" stroke-width="3.2" stroke-linejoin="round"/><polyline points="193.5,118 241,86" fill="none" stroke="#ffffff" stroke-width="3.2" stroke-linejoin="round"/><polyline points="168,79 177.4,85.8" fill="none" stroke="#ffffff" stroke-width="3.2" stroke-linejoin="round"/><polyline points="126.8,126 160,139 200,118" fill="none" stroke="#ffffff" stroke-width="3.2" stroke-linejoin="round"/><polyline points="160,138 186.8,160.8 201.5,177" fill="none" stroke="#ffffff" stroke-width="3.2" stroke-linejoin="round"/><polyline points="186.8,160.8 168,177" fill="none" stroke="#ffffff" stroke-width="3.2" stroke-linejoin="round"/><polyline points="188,161 202.8,148.8 219,141" fill="none" stroke="#ffffff" stroke-width="3.2" stroke-linejoin="round"/><polyline points="216.2,177 241,155.5" fill="none" stroke="#ffffff" stroke-width="3.2" stroke-linejoin="round"/><polyline points="138.9,128.7 149.6,118" fill="none" stroke="#ffffff" stroke-width="3.2" stroke-linejoin="round"/><polyline points="160,151.4 142.9,177" fill="none" stroke="#ffffff" stroke-width="3.2" stroke-linejoin="round"/><rect x="5.2" y="12.6" width="10.8" height="23" rx="1" fill="#fff" fill-opacity="0.85" stroke="#d0d0d0" stroke-width="0.6"/><path d="M5.2 24 H16" stroke="#ddd" stroke-width="0.5"/><path d="M8.1 18.3 H13.1 M10.6 15.8 V20.8" stroke="#c8c8c8" stroke-width="0.8"/><path d="M8.1 29.8 H13.1" stroke="#333" stroke-width="1.1"/><text x="7" y="9.5" font-size="4" fill="#777">最新</text><g font-size="4.4" fill="#8c7d55"><text x="20" y="17.6">文京区立</text><text x="20" y="23.6">柳町小学</text><text x="26.5" y="29.6">校</text></g><g font-size="4.4" fill="#8c7d55"><text x="57.5" y="64.6">文京区立</text><text x="57.5" y="70.6">第十中学</text><text x="64" y="76.6">校</text></g><path d="M136.9 87.2 C133.2 82.5 132.2 80.2 132.2 77.6 A4.7 4.7 0 0 1 141.6 77.6 C141.6 80.2 140.6 82.5 136.9 87.2Z" fill="#45b045"/><path d="M136.9 87.2 C135.5 85.4 134.6 84 134 83 L139.8 83 C139.2 84 138.3 85.4 136.9 87.2Z" fill="#2e8a2e"/><circle cx="136.9" cy="77.3" r="1.5" fill="#fff"/><rect x="223" y="169.5" width="18" height="7.5" fill="#fff" fill-opacity="0.7"/><text x="240" y="175.5" text-anchor="end" font-size="4" fill="#3a6fc0" font-family="Liberation Sans">Leaflet</text></svg>


<!-- charts -->
<div class="card" style="left:100.8px;top:195.3px;width:190.4px;height:114.9px"></div>
<div class="a" style="left:106.89999999999999px;top:201.5px;font-size:4.6px;color:#808080"><span style="display:inline-block;transform-origin:0 0;transform:scaleX(0.92)">測位ステータス</span></div>
<div class="a" style="left:106.89999999999999px;top:217.9px;width:3px;height:3px;border-radius:50%;background:#22aa22"></div>
<svg class="a" style="left:114.0px;top:216.70000000000002px" width="5.4" height="4.2" viewBox="0 0 5.4 4.2"><path d="M0.3 0 V3.9 H5.4" fill="none" stroke="#555" stroke-width="0.6"/><path d="M1.2 3 L2.5 1.6 L3.4 2.3 L5 0.6" fill="none" stroke="#555" stroke-width="0.55"/></svg>
<svg class="a" style="left:125.0px;top:216.10000000000002px" width="6.4" height="6.4" viewBox="0 0 6.4 6.4"><circle cx="3.2" cy="3.2" r="2.6" fill="#b7cbec" stroke="#5f86c8" stroke-width="0.9"/><text x="3.2" y="4.7" text-anchor="middle" font-size="4" font-weight="bold" fill="#4f78c0" font-family="Liberation Sans">?</text></svg>
<div class="a" style="left:241.4px;top:214px;width:43.2px;height:10.4px;border:0.6px solid #e6e6e6;box-shadow:0 0.6px 0.8px rgba(0,0,0,.10);background:#fff"></div>
<div class="a" style="left:243.6px;top:216.3px;font-size:4.8px;color:#3a3a3a;-webkit-text-stroke:0.05px #333"><span style="display:inline-block;transform-origin:0 0;transform:scaleX(0.92)">測位ステータス</span></div>
<svg class="a" style="left:278.20000000000005px;top:218.3px" width="4.4" height="2.4" viewBox="0 0 4.4 2.4"><path d="M0 0 H4.4 L2.2 2.2Z" fill="#1b55ab"/></svg>
<svg class="a" style="left:0;top:0" width="700" height="441" viewBox="0 0 700 441"><path d="M122.2 240.2 H123.5 V300 H286.4 V298.7" fill="none" stroke="#777" stroke-width="0.7"/><path d="M121.9 240.9 H123.5" stroke="#777" stroke-width="0.6"/><text x="120.7" y="242.45000000000002" text-anchor="end" font-size="4.4" fill="#333" font-family="Liberation Sans">5</text><path d="M121.9 252.6 H123.5" stroke="#777" stroke-width="0.6"/><text x="120.7" y="254.15" text-anchor="end" font-size="4.4" fill="#333" font-family="Liberation Sans">4</text><path d="M121.9 264.4 H123.5" stroke="#777" stroke-width="0.6"/><text x="120.7" y="265.95" text-anchor="end" font-size="4.4" fill="#333" font-family="Liberation Sans">3</text><path d="M121.9 276.2 H123.5" stroke="#777" stroke-width="0.6"/><text x="120.7" y="277.75" text-anchor="end" font-size="4.4" fill="#333" font-family="Liberation Sans">2</text><path d="M121.9 288 H123.5" stroke="#777" stroke-width="0.6"/><text x="120.7" y="289.55" text-anchor="end" font-size="4.4" fill="#333" font-family="Liberation Sans">1</text><path d="M121.9 299.7 H123.5" stroke="#777" stroke-width="0.6"/><text x="120.7" y="301.25" text-anchor="end" font-size="4.4" fill="#333" font-family="Liberation Sans">0</text><path d="M156.4 300 V301.6" stroke="#777" stroke-width="0.6"/><text x="156.4" y="306.0" text-anchor="middle" font-size="4.4" fill="#333" font-family="Liberation Sans">:45</text><path d="M197.7 300 V301.6" stroke="#777" stroke-width="0.6"/><text x="197.7" y="306.0" text-anchor="middle" font-size="4.4" fill="#333" font-family="Liberation Sans">09:48</text><path d="M238.2 300 V301.6" stroke="#777" stroke-width="0.6"/><text x="238.2" y="306.0" text-anchor="middle" font-size="4.4" fill="#333" font-family="Liberation Sans">:15</text><path d="M279 300 V301.6" stroke="#777" stroke-width="0.6"/><text x="279" y="306.0" text-anchor="middle" font-size="4.4" fill="#333" font-family="Liberation Sans">:30</text><path d="M123.6 240.9 L125.9 240.9 L130.7 276.3 L133.6 276.3 L135.6 240.9 L152.1 240.9 L155.0 276.3 L157.3 240.9 L166.4 240.9 L168.7 276.3 L170.1 240.9 L171.6 240.9 L173.6 276.3 L176.4 240.9 L185.0 240.9 L187.0 276.3 L189.3 240.9 L209.3 240.9 L212.1 276.3 L214.4 276.3 L217.3 240.9 L227.9 240.9 L231.6 252.3 L286.4 252.3" fill="none" stroke="#d6cd6c" stroke-width="0.9" stroke-linejoin="round"/><path d="M110 294.3 H123.5" stroke="#d6cd6c" stroke-width="0.9"/><circle cx="110" cy="294.3" r="2" fill="#c2b22a"/><text transform="translate(110.39999999999999 275) rotate(-90)" text-anchor="middle" font-size="4.1" fill="#999" font-family="Liberation Sans">測位ステータス</text></svg>
<div class="card" style="left:300.7px;top:195.3px;width:141.1px;height:114.9px"></div>
<div class="a" style="left:306.8px;top:201.5px;font-size:4.6px;color:#808080">方位</div>
<div class="a" style="left:306.8px;top:217.9px;width:3px;height:3px;border-radius:50%;background:#22aa22"></div>
<svg class="a" style="left:313.9px;top:216.70000000000002px" width="5.4" height="4.2" viewBox="0 0 5.4 4.2"><path d="M0.3 0 V3.9 H5.4" fill="none" stroke="#555" stroke-width="0.6"/><path d="M1.2 3 L2.5 1.6 L3.4 2.3 L5 0.6" fill="none" stroke="#555" stroke-width="0.55"/></svg>
<svg class="a" style="left:324.9px;top:216.10000000000002px" width="6.4" height="6.4" viewBox="0 0 6.4 6.4"><circle cx="3.2" cy="3.2" r="2.6" fill="#b7cbec" stroke="#5f86c8" stroke-width="0.9"/><text x="3.2" y="4.7" text-anchor="middle" font-size="4" font-weight="bold" fill="#4f78c0" font-family="Liberation Sans">?</text></svg>
<div class="a" style="left:414px;top:214px;width:21.8px;height:10.4px;border:0.6px solid #e6e6e6;box-shadow:0 0.6px 0.8px rgba(0,0,0,.10);background:#fff"></div>
<div class="a" style="left:416.2px;top:216.3px;font-size:4.8px;color:#3a3a3a;-webkit-text-stroke:0.05px #333"><span style="display:inline-block;transform-origin:0 0;transform:scaleX(1)">方位</span></div>
<svg class="a" style="left:429.40000000000003px;top:218.3px" width="4.4" height="2.4" viewBox="0 0 4.4 2.4"><path d="M0 0 H4.4 L2.2 2.2Z" fill="#1b55ab"/></svg>
<svg class="a" style="left:0;top:0" width="700" height="441" viewBox="0 0 700 441"><path d="M322.8 240.5 H324.1 V300.6 H437.8 V299.3" fill="none" stroke="#777" stroke-width="0.7"/><path d="M322.5 249 H324.1" stroke="#777" stroke-width="0.6"/><text x="321.3" y="250.55" text-anchor="end" font-size="4.4" fill="#333" font-family="Liberation Sans">300</text><path d="M322.5 257.7 H324.1" stroke="#777" stroke-width="0.6"/><text x="321.3" y="259.25" text-anchor="end" font-size="4.4" fill="#333" font-family="Liberation Sans">250</text><path d="M322.5 266.6 H324.1" stroke="#777" stroke-width="0.6"/><text x="321.3" y="268.15000000000003" text-anchor="end" font-size="4.4" fill="#333" font-family="Liberation Sans">200</text><path d="M322.5 275.3 H324.1" stroke="#777" stroke-width="0.6"/><text x="321.3" y="276.85" text-anchor="end" font-size="4.4" fill="#333" font-family="Liberation Sans">150</text><path d="M322.5 284 H324.1" stroke="#777" stroke-width="0.6"/><text x="321.3" y="285.55" text-anchor="end" font-size="4.4" fill="#333" font-family="Liberation Sans">100</text><path d="M322.5 292.5 H324.1" stroke="#777" stroke-width="0.6"/><text x="321.3" y="294.05" text-anchor="end" font-size="4.4" fill="#333" font-family="Liberation Sans">50</text><path d="M346.6 300.6 V302.20000000000005" stroke="#777" stroke-width="0.6"/><text x="346.6" y="306.6" text-anchor="middle" font-size="4.4" fill="#333" font-family="Liberation Sans">:45</text><path d="M375.2 300.6 V302.20000000000005" stroke="#777" stroke-width="0.6"/><text x="375.2" y="306.6" text-anchor="middle" font-size="4.4" fill="#333" font-family="Liberation Sans">09:48</text><path d="M403.5 300.6 V302.20000000000005" stroke="#777" stroke-width="0.6"/><text x="403.5" y="306.6" text-anchor="middle" font-size="4.4" fill="#333" font-family="Liberation Sans">:15</text><path d="M432.3 300.6 V302.20000000000005" stroke="#777" stroke-width="0.6"/><text x="432.3" y="306.6" text-anchor="middle" font-size="4.4" fill="#333" font-family="Liberation Sans">:30</text><path d="M323.6 292.1 L327.7 291.3 L335.8 271.7 L338.0 271.1 L340.7 241.2 L341.8 244.5 L343.5 271.7 L346.2 282.6 L352.2 300.3 L354.4 296.2 L356.3 248.5 L358.2 255.3 L366.3 243.1 L368.0 259.4 L369.1 244.5 L382.7 279.8 L387.0 252.1" fill="none" stroke="#ee9a76" stroke-width="0.9" stroke-linejoin="round"/><path d="M310.5 294.3 H324.1" stroke="#ee9a76" stroke-width="0.9"/><circle cx="310.5" cy="294.3" r="2" fill="#e8541e"/><text transform="translate(310.3 273.9) rotate(-90)" text-anchor="middle" font-size="4.1" fill="#999" font-family="Liberation Sans">方位 [°]</text></svg>
<div class="card" style="left:100.8px;top:319.4px;width:190.4px;height:114.6px"></div>
<div class="a" style="left:106.89999999999999px;top:325.59999999999997px;font-size:4.6px;color:#808080">速度</div>
<div class="a" style="left:106.89999999999999px;top:342.0px;width:3px;height:3px;border-radius:50%;background:#22aa22"></div>
<svg class="a" style="left:114.0px;top:340.79999999999995px" width="5.4" height="4.2" viewBox="0 0 5.4 4.2"><path d="M0.3 0 V3.9 H5.4" fill="none" stroke="#555" stroke-width="0.6"/><path d="M1.2 3 L2.5 1.6 L3.4 2.3 L5 0.6" fill="none" stroke="#555" stroke-width="0.55"/></svg>
<svg class="a" style="left:125.0px;top:340.2px" width="6.4" height="6.4" viewBox="0 0 6.4 6.4"><circle cx="3.2" cy="3.2" r="2.6" fill="#b7cbec" stroke="#5f86c8" stroke-width="0.9"/><text x="3.2" y="4.7" text-anchor="middle" font-size="4" font-weight="bold" fill="#4f78c0" font-family="Liberation Sans">?</text></svg>
<div class="a" style="left:264.4px;top:338.2px;width:20.8px;height:10.4px;border:0.6px solid #e6e6e6;box-shadow:0 0.6px 0.8px rgba(0,0,0,.10);background:#fff"></div>
<div class="a" style="left:266.59999999999997px;top:340.5px;font-size:4.8px;color:#3a3a3a;-webkit-text-stroke:0.05px #333"><span style="display:inline-block;transform-origin:0 0;transform:scaleX(1)">速度</span></div>
<svg class="a" style="left:278.8px;top:342.5px" width="4.4" height="2.4" viewBox="0 0 4.4 2.4"><path d="M0 0 H4.4 L2.2 2.2Z" fill="#1b55ab"/></svg>
<svg class="a" style="left:0;top:0" width="700" height="441" viewBox="0 0 700 441"><path d="M122.5 364.7 H123.8 V423.9 H287.6 V422.59999999999997" fill="none" stroke="#777" stroke-width="0.7"/><path d="M122.2 373.9 H123.8" stroke="#777" stroke-width="0.6"/><text x="121.0" y="375.45" text-anchor="end" font-size="4.4" fill="#333" font-family="Liberation Sans">2.5</text><path d="M122.2 383.8 H123.8" stroke="#777" stroke-width="0.6"/><text x="121.0" y="385.35" text-anchor="end" font-size="4.4" fill="#333" font-family="Liberation Sans">2</text><path d="M122.2 394 H123.8" stroke="#777" stroke-width="0.6"/><text x="121.0" y="395.55" text-anchor="end" font-size="4.4" fill="#333" font-family="Liberation Sans">1.5</text><path d="M122.2 404.1 H123.8" stroke="#777" stroke-width="0.6"/><text x="121.0" y="405.65000000000003" text-anchor="end" font-size="4.4" fill="#333" font-family="Liberation Sans">1</text><path d="M122.2 413.9 H123.8" stroke="#777" stroke-width="0.6"/><text x="121.0" y="415.45" text-anchor="end" font-size="4.4" fill="#333" font-family="Liberation Sans">0.5</text><path d="M122.2 423.6 H123.8" stroke="#777" stroke-width="0.6"/><text x="121.0" y="425.15000000000003" text-anchor="end" font-size="4.4" fill="#333" font-family="Liberation Sans">0</text><path d="M156.4 423.9 V425.5" stroke="#777" stroke-width="0.6"/><text x="156.4" y="429.9" text-anchor="middle" font-size="4.4" fill="#333" font-family="Liberation Sans">:45</text><path d="M197.7 423.9 V425.5" stroke="#777" stroke-width="0.6"/><text x="197.7" y="429.9" text-anchor="middle" font-size="4.4" fill="#333" font-family="Liberation Sans">09:48</text><path d="M238.2 423.9 V425.5" stroke="#777" stroke-width="0.6"/><text x="238.2" y="429.9" text-anchor="middle" font-size="4.4" fill="#333" font-family="Liberation Sans">:15</text><path d="M279 423.9 V425.5" stroke="#777" stroke-width="0.6"/><text x="279" y="429.9" text-anchor="middle" font-size="4.4" fill="#333" font-family="Liberation Sans">:30</text><path d="M123.8 422.9 L126.8 382.2 L129.2 405.1 L132.1 418.5 L135.1 417.0 L138.1 399.2 L142.5 420.0 L145.5 409.6 L148.5 394.7 L151.5 408.1 L155.9 422.3 L161.9 412.5 L164.8 377.8 L167.8 408.1 L170.8 407.5 L173.8 420.0 L178.2 422.3 L181.2 411.0 L184.2 365.0 L187.1 405.1 L190.1 422.3 L193.1 421.4 L197.5 415.5 L200.5 418.5 L202.6 421.4 L205.5 380.4 L208.5 399.2 L211.5 400.6 L214.5 422.9 L287.6 423.5" fill="none" stroke="#8de27a" stroke-width="0.9" stroke-linejoin="round"/><path d="M110.1 418.4 H123.8" stroke="#8de27a" stroke-width="0.9"/><circle cx="110.1" cy="418.4" r="2" fill="#22d622"/><text transform="translate(110.39999999999999 398.9) rotate(-90)" text-anchor="middle" font-size="4.1" fill="#999" font-family="Liberation Sans">速度 [km/h]</text></svg>
<div class="card" style="left:300.7px;top:319.4px;width:190.9px;height:114.6px"></div>
<div class="a" style="left:306.8px;top:325.59999999999997px;font-size:4.6px;color:#808080">高度</div>
<div class="a" style="left:306.8px;top:342.0px;width:3px;height:3px;border-radius:50%;background:#22aa22"></div>
<svg class="a" style="left:313.9px;top:340.79999999999995px" width="5.4" height="4.2" viewBox="0 0 5.4 4.2"><path d="M0.3 0 V3.9 H5.4" fill="none" stroke="#555" stroke-width="0.6"/><path d="M1.2 3 L2.5 1.6 L3.4 2.3 L5 0.6" fill="none" stroke="#555" stroke-width="0.55"/></svg>
<svg class="a" style="left:324.9px;top:340.2px" width="6.4" height="6.4" viewBox="0 0 6.4 6.4"><circle cx="3.2" cy="3.2" r="2.6" fill="#b7cbec" stroke="#5f86c8" stroke-width="0.9"/><text x="3.2" y="4.7" text-anchor="middle" font-size="4" font-weight="bold" fill="#4f78c0" font-family="Liberation Sans">?</text></svg>
<div class="a" style="left:464.3px;top:338.2px;width:20.8px;height:10.4px;border:0.6px solid #e6e6e6;box-shadow:0 0.6px 0.8px rgba(0,0,0,.10);background:#fff"></div>
<div class="a" style="left:466.5px;top:340.5px;font-size:4.8px;color:#3a3a3a;-webkit-text-stroke:0.05px #333"><span style="display:inline-block;transform-origin:0 0;transform:scaleX(1)">高度</span></div>
<svg class="a" style="left:478.70000000000005px;top:342.5px" width="4.4" height="2.4" viewBox="0 0 4.4 2.4"><path d="M0 0 H4.4 L2.2 2.2Z" fill="#1b55ab"/></svg>
<svg class="a" style="left:0;top:0" width="700" height="441" viewBox="0 0 700 441"><path d="M322.5 364.7 H323.8 V423.9 H487.6 V422.59999999999997" fill="none" stroke="#777" stroke-width="0.7"/><path d="M322.2 373.9 H323.8" stroke="#777" stroke-width="0.6"/><text x="321.0" y="375.45" text-anchor="end" font-size="4.4" fill="#333" font-family="Liberation Sans">34</text><path d="M322.2 384 H323.8" stroke="#777" stroke-width="0.6"/><text x="321.0" y="385.55" text-anchor="end" font-size="4.4" fill="#333" font-family="Liberation Sans">32</text><path d="M322.2 394 H323.8" stroke="#777" stroke-width="0.6"/><text x="321.0" y="395.55" text-anchor="end" font-size="4.4" fill="#333" font-family="Liberation Sans">30</text><path d="M322.2 404 H323.8" stroke="#777" stroke-width="0.6"/><text x="321.0" y="405.55" text-anchor="end" font-size="4.4" fill="#333" font-family="Liberation Sans">28</text><path d="M322.2 413.8 H323.8" stroke="#777" stroke-width="0.6"/><text x="321.0" y="415.35" text-anchor="end" font-size="4.4" fill="#333" font-family="Liberation Sans">26</text><path d="M322.2 423.5 H323.8" stroke="#777" stroke-width="0.6"/><text x="321.0" y="425.05" text-anchor="end" font-size="4.4" fill="#333" font-family="Liberation Sans">24</text><path d="M356.4 423.9 V425.5" stroke="#777" stroke-width="0.6"/><text x="356.4" y="429.9" text-anchor="middle" font-size="4.4" fill="#333" font-family="Liberation Sans">:45</text><path d="M397.7 423.9 V425.5" stroke="#777" stroke-width="0.6"/><text x="397.7" y="429.9" text-anchor="middle" font-size="4.4" fill="#333" font-family="Liberation Sans">09:48</text><path d="M438.2 423.9 V425.5" stroke="#777" stroke-width="0.6"/><text x="438.2" y="429.9" text-anchor="middle" font-size="4.4" fill="#333" font-family="Liberation Sans">:15</text><path d="M479 423.9 V425.5" stroke="#777" stroke-width="0.6"/><text x="479" y="429.9" text-anchor="middle" font-size="4.4" fill="#333" font-family="Liberation Sans">:30</text><path d="M323.8 406.6 L327.7 404.5 L332.1 403.6 L336.6 400.6 L342.5 399.1 L348.5 398.5 L355.9 397.6 L363.3 398.5 L370.8 400.0 L377.6 402.1 L381.2 400.6 L388.6 400.0 L397.5 401.5 L407.9 405.7 L413.8 404.5 L418.3 402.7 L427.2 403.0 L430.2 388.7 L487.5 388.7" fill="none" stroke="#7b7a55" stroke-width="0.9" stroke-linejoin="round"/><path d="M310.5 418.5 H323.8" stroke="#7b7a55" stroke-width="0.9"/><circle cx="310.5" cy="418.5" r="2" fill="#474710"/><text transform="translate(310.3 397.9) rotate(-90)" text-anchor="middle" font-size="4.1" fill="#999" font-family="Liberation Sans">高度</text></svg>

<div class="card" style="left:500.7px;top:319.4px;width:191.2px;height:114.6px"></div>
<div class="a" style="left:506.9px;top:325.8px;font-size:4.6px;color:#909090"><span style="display:inline-block;transform-origin:0 0;transform:scaleX(0.91)">イベント リスト</span></div>
<div class="a" style="left:506.9px;top:339.7px;width:40.89999999999998px;height:10.4px;border:0.6px solid #dedede;box-shadow:0 0.5px 0.6px rgba(0,0,0,.08);background:#fff"></div>
<div class="a" style="left:509.29999999999995px;top:342.3px;font-size:4.6px;color:#888;font-style:italic">開始日</div>
<svg class="a" style="left:538.5999999999999px;top:341.4px" width="6" height="6" viewBox="0 0 6 6"><rect x="0.45" y="0.9" width="5.1" height="4.7" rx="0.5" fill="none" stroke="#1b55ab" stroke-width="0.8"/><rect x="0.45" y="0.9" width="5.1" height="1.5" fill="#1b55ab"/><path d="M1.6 0 V1.2 M4.4 0 V1.2" stroke="#1b55ab" stroke-width="0.7"/></svg>
<div class="a" style="left:550px;top:339.7px;width:40.10000000000002px;height:10.4px;border:0.6px solid #dedede;box-shadow:0 0.5px 0.6px rgba(0,0,0,.08);background:#fff"></div>
<div class="a" style="left:552.4px;top:342.3px;font-size:4.6px;color:#888;font-style:italic">終了日</div>
<svg class="a" style="left:580.9px;top:341.4px" width="6" height="6" viewBox="0 0 6 6"><rect x="0.45" y="0.9" width="5.1" height="4.7" rx="0.5" fill="none" stroke="#1b55ab" stroke-width="0.8"/><rect x="0.45" y="0.9" width="5.1" height="1.5" fill="#1b55ab"/><path d="M1.6 0 V1.2 M4.4 0 V1.2" stroke="#1b55ab" stroke-width="0.7"/></svg>
<svg class="a" style="left:594.2px;top:343.4px" width="3.6" height="3.8" viewBox="0 0 4 4"><path d="M0 0.2 H4 L2.5 2 V3.8 L1.5 3.2 V2Z" fill="#1b55ab"/></svg>
<div class="a" style="left:590.1px;top:339.7px;width:10px;height:10.4px;border:0.6px solid #e4e4e4;border-left:none"></div>
<svg class="a" style="left:627px;top:344.3px" width="3.6" height="3.6" viewBox="0 0 3.6 3.6"><circle cx="1.8" cy="1.8" r="1.35" fill="#22aa22"/></svg>
<div class="a" style="left:634.3px;top:343.1px;font-size:5.2px;color:#3f5c8f;-webkit-text-stroke:0.3px #3f5c8f"><span style="display:inline-block;transform-origin:0 0;transform:scaleX(1.05)">リアルタイム</span></div>
<svg class="a" style="left:675.3px;top:343.3px" width="6" height="5.2" viewBox="0 0 6 5.2"><path d="M4.9 1.6 A2.2 2.2 0 0 0 1 1.4" fill="none" stroke="#34558f" stroke-width="0.85"/><path d="M1.1 3.6 A2.2 2.2 0 0 0 5 3.8" fill="none" stroke="#34558f" stroke-width="0.85"/><path d="M5.9 0.3 L5.6 2.4 L3.7 1.7Z M0.1 4.9 L0.4 2.8 L2.3 3.5Z" fill="#34558f"/></svg>
<div class="a" style="left:690.3px;top:338.2px;width:1.6px;height:6.2px;background:#333"></div>
<div class="a" style="left:536.7px;top:370px;width:0.5px;height:64px;background:#efefef"></div>
<div class="a" style="left:507.2px;top:366.5px;font-size:4.9px;color:#222;-webkit-text-stroke:0.1px #222">2023/11⋯</div>
<div class="a" style="right:169.29999999999995px;top:371.1px;font-size:4.4px;color:#444">9:48:33</div>
<div class="a" style="left:535px;top:367.70000000000005px;width:3.9px;height:3.9px;border-radius:50%;background:#a5a5a5;box-shadow:0 0 0 0.5px #d8d8d8"></div>
<div class="a" style="left:544.2px;top:357.8px;width:77.4px;height:24.7px;background:#e2edfa;"></div>
<svg class="a" style="left:541px;top:366.6px" width="4" height="6" viewBox="0 0 4 6"><path d="M4 0 L0.5 3 L4 6Z" fill="#e2edfa"/></svg>
<div class="a" style="left:557.5px;top:362.90000000000003px;font-size:6px;color:#444"><span style="display:inline-block;transform-origin:0 0;transform:scaleX(1.0)">Location updated</span></div>
<svg class="a" style="left:611.4px;top:365.1px" width="3.8" height="2.2" viewBox="0 0 3.8 2.2"><path d="M0.3 0.3 L1.9 1.8 L3.5 0.3" fill="none" stroke="#7a93bb" stroke-width="0.5"/></svg>
<svg class="a" style="left:557.9px;top:371.40000000000003px" width="4.4" height="4.4" viewBox="0 0 4.4 4.4"><circle cx="2.2" cy="2.2" r="1.8" fill="none" stroke="#444" stroke-width="0.65"/><circle cx="2.2" cy="2.2" r="1.0" fill="#444"/></svg>
<div class="a" style="left:566.9px;top:370.5px;font-size:5.6px;color:#555"><span style="display:inline-block;transform-origin:0 0;transform:scaleX(0.95)">測留車 MTR⋯</span></div>
<div class="a" style="left:507.2px;top:394.2px;font-size:4.9px;color:#222;-webkit-text-stroke:0.1px #222">2023/11⋯</div>
<div class="a" style="right:169.29999999999995px;top:398.8px;font-size:4.4px;color:#444">9:48:32</div>
<div class="a" style="left:535px;top:395.40000000000003px;width:3.9px;height:3.9px;border-radius:50%;background:#a5a5a5;box-shadow:0 0 0 0.5px #d8d8d8"></div>
<div class="a" style="left:544.2px;top:385.5px;width:77.4px;height:24.7px;background:#fff;border-bottom:0.6px solid #ececec;box-shadow:-0.4px 0 0.8px rgba(0,0,0,.06);"></div>
<div class="a" style="left:557.5px;top:390.6px;font-size:6px;color:#444"><span style="display:inline-block;transform-origin:0 0;transform:scaleX(1.0)">Location updated</span></div>
<svg class="a" style="left:611.4px;top:392.8px" width="3.8" height="2.2" viewBox="0 0 3.8 2.2"><path d="M0.3 0.3 L1.9 1.8 L3.5 0.3" fill="none" stroke="#7a93bb" stroke-width="0.5"/></svg>
<svg class="a" style="left:557.9px;top:399.1px" width="4.4" height="4.4" viewBox="0 0 4.4 4.4"><circle cx="2.2" cy="2.2" r="1.8" fill="none" stroke="#444" stroke-width="0.65"/><circle cx="2.2" cy="2.2" r="1.0" fill="#444"/></svg>
<div class="a" style="left:566.9px;top:398.2px;font-size:5.6px;color:#555"><span style="display:inline-block;transform-origin:0 0;transform:scaleX(0.95)">測留車 MTR⋯</span></div>
<div class="a" style="left:507.2px;top:421.9px;font-size:4.9px;color:#222;-webkit-text-stroke:0.1px #222">2023/11⋯</div>
<div class="a" style="right:169.29999999999995px;top:426.5px;font-size:4.4px;color:#444">9:48:31</div>
<div class="a" style="left:535px;top:423.1px;width:3.9px;height:3.9px;border-radius:50%;background:#a5a5a5;box-shadow:0 0 0 0.5px #d8d8d8"></div>
<div class="a" style="left:544.2px;top:413.2px;width:77.4px;height:24.7px;background:#fff;border-bottom:0.6px solid #ececec;box-shadow:-0.4px 0 0.8px rgba(0,0,0,.06);"></div>
<div class="a" style="left:557.5px;top:418.3px;font-size:6px;color:#444"><span style="display:inline-block;transform-origin:0 0;transform:scaleX(1.0)">Location updated</span></div>
<svg class="a" style="left:611.4px;top:420.5px" width="3.8" height="2.2" viewBox="0 0 3.8 2.2"><path d="M0.3 0.3 L1.9 1.8 L3.5 0.3" fill="none" stroke="#7a93bb" stroke-width="0.5"/></svg>
<svg class="a" style="left:557.9px;top:426.8px" width="4.4" height="4.4" viewBox="0 0 4.4 4.4"><circle cx="2.2" cy="2.2" r="1.8" fill="none" stroke="#444" stroke-width="0.65"/><circle cx="2.2" cy="2.2" r="1.0" fill="#444"/></svg>
<div class="a" style="left:566.9px;top:425.9px;font-size:5.6px;color:#555"><span style="display:inline-block;transform-origin:0 0;transform:scaleX(0.95)">測留車 MTR⋯</span></div>
<div class="a" style="left:500px;top:434px;width:193px;height:7px;background:#f8f8f8"></div>


</body></html>
